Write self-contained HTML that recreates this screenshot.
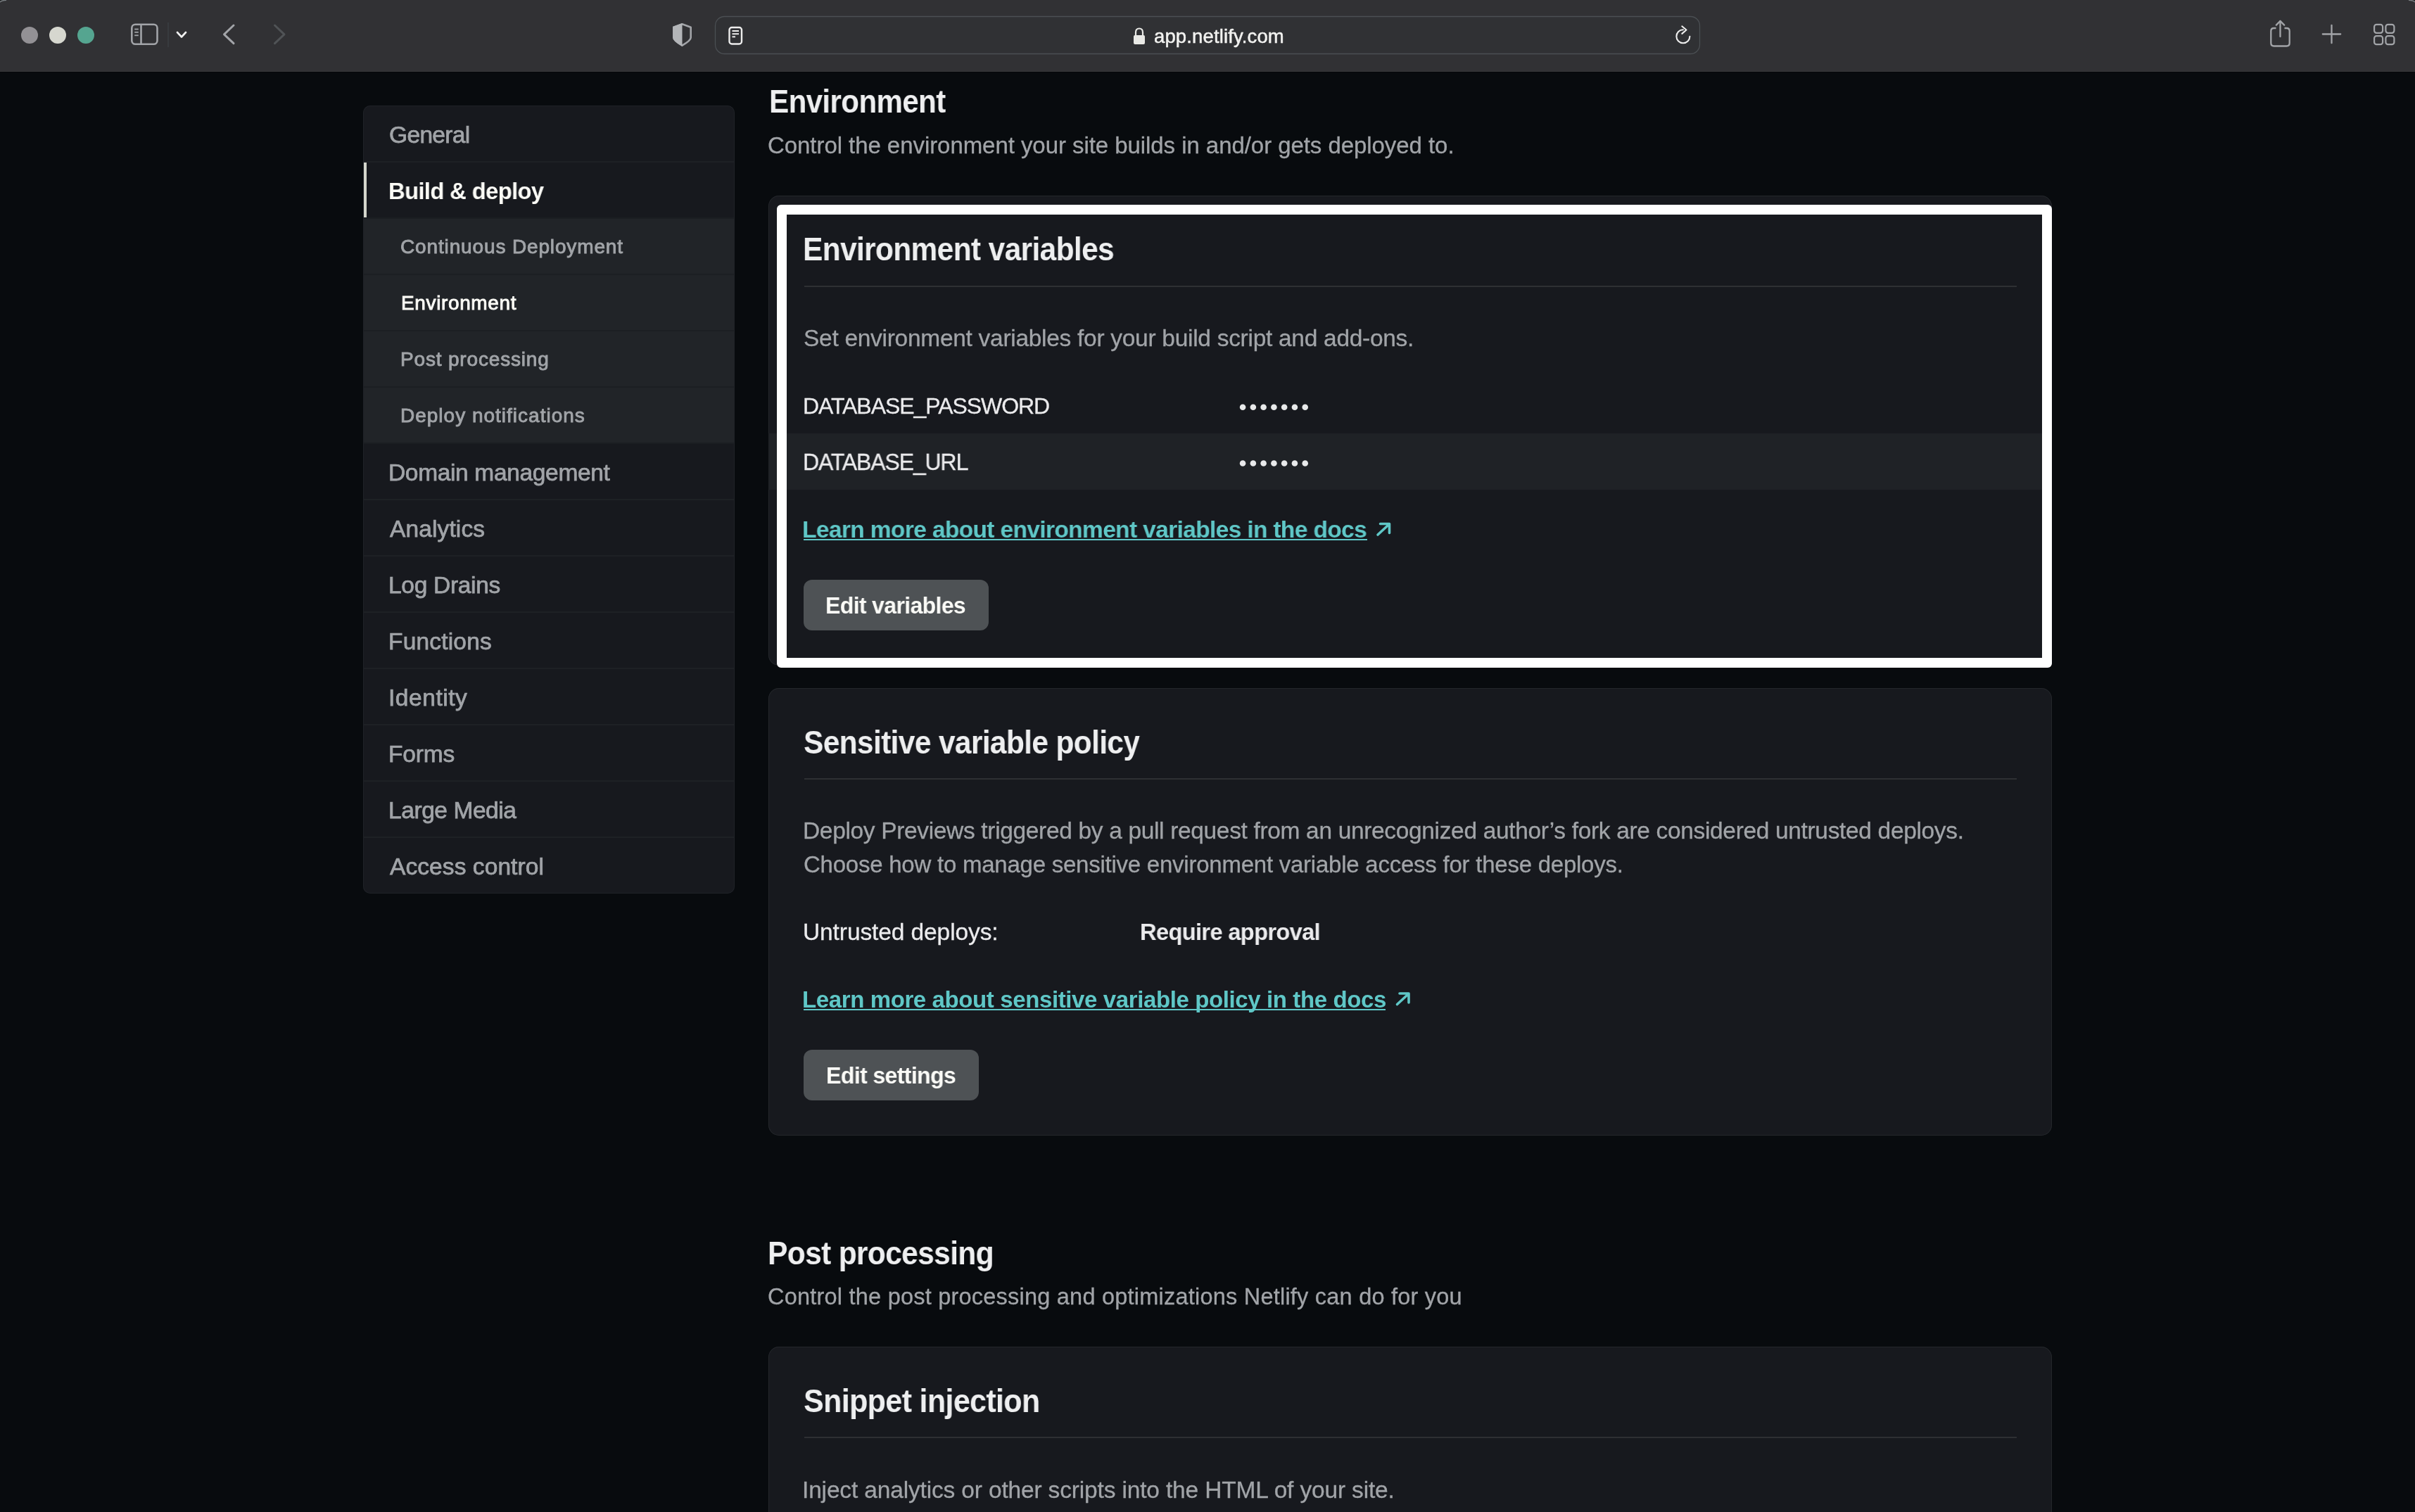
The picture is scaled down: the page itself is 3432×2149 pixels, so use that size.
<!DOCTYPE html>
<html><head><meta charset="utf-8"><style>
html,body{margin:0;padding:0;width:3432px;height:2149px;overflow:hidden;background:#080b0e;}
.b{position:absolute;}
.t{position:absolute;white-space:nowrap;font-family:"Liberation Sans",sans-serif;will-change:transform;}
</style></head><body>
<div class="b" style="left:0px;top:0px;width:3432px;height:102px;background:#313134;"></div>
<div class="b" style="left:0px;top:101px;width:3432px;height:1px;background:#363638;"></div>
<div class="b" style="left:0px;top:102px;width:3432px;height:1px;background:#050709;"></div>
<div class="b" style="left:30px;top:38px;width:24px;height:24px;background:#939195;border-radius:50%;"></div>
<div class="b" style="left:70px;top:38px;width:24px;height:24px;background:#d6d7cf;border-radius:50%;"></div>
<div class="b" style="left:110px;top:38px;width:24px;height:24px;background:#55a590;border-radius:50%;"></div>
<svg class="b" style="left:0;top:0" width="3432" height="102" viewBox="0 0 3432 102"><rect x="187.3" y="34.8" width="36.2" height="28" rx="5" fill="none" stroke="#a2a4a8" stroke-width="2.6"/><line x1="200.5" y1="35" x2="200.5" y2="63" stroke="#a2a4a8" stroke-width="2.6"/><line x1="191.2" y1="41.5" x2="196.8" y2="41.5" stroke="#a2a4a8" stroke-width="1.8"/><line x1="191.2" y1="45.8" x2="196.8" y2="45.8" stroke="#a2a4a8" stroke-width="1.8"/><line x1="191.2" y1="50.3" x2="196.8" y2="50.3" stroke="#a2a4a8" stroke-width="1.8"/><line x1="239" y1="32" x2="239" y2="67" stroke="#3f4347" stroke-width="1.2"/><polyline points="252,46 258,52.5 264,46" fill="none" stroke="#f2f2f2" stroke-width="2.6" stroke-linecap="round" stroke-linejoin="round"/><polyline points="332,36 318.5,48.8 332,61.6" fill="none" stroke="#a2a4a8" stroke-width="3" stroke-linecap="round" stroke-linejoin="round"/><polyline points="390.5,36 404,48.8 390.5,61.6" fill="none" stroke="#505356" stroke-width="3" stroke-linecap="round" stroke-linejoin="round"/><path d="M969.5,34.3 L981.7,38.8 L981.7,53.5 Q981.7,57.5 969.5,64.6 Q957.3,57.5 957.3,53.5 L957.3,38.8 Z" fill="none" stroke="#a2a4a8" stroke-width="2.6" stroke-linejoin="round"/><path d="M969.5,33 L956.2,37.8 L956.2,53.8 Q956.2,58.5 969.5,66 Z" fill="#b3b5b8"/><rect x="1016.5" y="23.5" width="1399" height="53" rx="13" fill="#303134" stroke="#4b4f53" stroke-width="1.3"/><rect x="1036.5" y="39" width="17.5" height="23.5" rx="3.5" fill="none" stroke="#ececec" stroke-width="2.4"/><line x1="1040.5" y1="44" x2="1050" y2="44" stroke="#ececec" stroke-width="2"/><line x1="1040.5" y1="48.2" x2="1050" y2="48.2" stroke="#ececec" stroke-width="2"/><line x1="1040.5" y1="52.3" x2="1045" y2="52.3" stroke="#ececec" stroke-width="2"/><path d="M1614,51 L1614,46 Q1614,40.5 1619,40.5 Q1624,40.5 1624,46 L1624,51" fill="none" stroke="#e9e9e6" stroke-width="2.2"/><rect x="1611" y="50" width="16" height="13" rx="2" fill="#e9e9e6"/><path d="M2401.4,51.8 A9.5,9.5 0 1 1 2391.9,42.3" fill="none" stroke="#ededed" stroke-width="2.1" stroke-linecap="round"/><polyline points="2390.3,37.3 2396.5,42.5 2390.3,47.9" fill="none" stroke="#ededed" stroke-width="2.1" stroke-linecap="round" stroke-linejoin="round"/><path d="M3234.5,40 L3231.5,40 Q3227.3,40 3227.3,44.2 L3227.3,61.3 Q3227.3,65.5 3231.5,65.5 L3249.5,65.5 Q3253.7,65.5 3253.7,61.3 L3253.7,44.2 Q3253.7,40 3249.5,40 L3246.5,40" fill="none" stroke="#a2a4a8" stroke-width="2.3"/><line x1="3240.5" y1="30" x2="3240.5" y2="52" stroke="#a2a4a8" stroke-width="2.3" stroke-linecap="round"/><polyline points="3234.8,35.6 3240.5,29.9 3246.2,35.6" fill="none" stroke="#a2a4a8" stroke-width="2.3" stroke-linecap="round" stroke-linejoin="round"/><line x1="3313.5" y1="35.8" x2="3313.5" y2="61.2" stroke="#a2a4a8" stroke-width="2.3" stroke-linecap="round"/><line x1="3300.8" y1="48.5" x2="3326.2" y2="48.5" stroke="#a2a4a8" stroke-width="2.3" stroke-linecap="round"/><rect x="3374.1" y="34.8" width="12" height="12" rx="3.2" fill="none" stroke="#a2a4a8" stroke-width="2.2"/><rect x="3374.1" y="51.1" width="12" height="12" rx="3.2" fill="none" stroke="#a2a4a8" stroke-width="2.2"/><rect x="3390.4" y="34.8" width="12" height="12" rx="3.2" fill="none" stroke="#a2a4a8" stroke-width="2.2"/><rect x="3390.4" y="51.1" width="12" height="12" rx="3.2" fill="none" stroke="#a2a4a8" stroke-width="2.2"/><path d="M0,0 L9,0 Q2,0.5 0,3 Z" fill="#1b1c1d"/><path d="M0,3 Q2,0.5 9,0.2" fill="none" stroke="#7b8185" stroke-width="1.4"/><path d="M3432,0 L3423,0 Q3430,0.5 3432,3 Z" fill="#1b1c1d"/><path d="M3432,3 Q3430,0.5 3423,0.2" fill="none" stroke="#7b8185" stroke-width="1.4"/></svg>
<div class="t" style="left:1640.10px;top:34.4px;font-size:27.5px;line-height:36px;font-weight:400;color:#f2f2f0;letter-spacing:0.13px;-webkit-text-stroke:0.5px #f2f2f0;">app.netlify.com</div>
<div class="b" style="left:0px;top:103px;width:3432px;height:2046px;background:#080b0e;"></div>
<div class="b" style="left:516px;top:150px;width:528px;height:1120px;background:#17191e;border-radius:10px;box-shadow:inset 0 0 0 1px #1f2227;"></div>
<div class="b" style="left:517px;top:311px;width:526px;height:318px;background:#212428;"></div>
<div class="b" style="left:517px;top:229px;width:526px;height:2px;background:#1e2125;"></div>
<div class="b" style="left:517px;top:309px;width:526px;height:2px;background:#1b1e22;"></div>
<div class="b" style="left:517px;top:389px;width:526px;height:2px;background:#1c1f23;"></div>
<div class="b" style="left:517px;top:469px;width:526px;height:2px;background:#1c1f23;"></div>
<div class="b" style="left:517px;top:549px;width:526px;height:2px;background:#1c1f23;"></div>
<div class="b" style="left:517px;top:629px;width:526px;height:2px;background:#1b1e22;"></div>
<div class="b" style="left:517px;top:709px;width:526px;height:2px;background:#1e2125;"></div>
<div class="b" style="left:517px;top:789px;width:526px;height:2px;background:#1e2125;"></div>
<div class="b" style="left:517px;top:869px;width:526px;height:2px;background:#1e2125;"></div>
<div class="b" style="left:517px;top:949px;width:526px;height:2px;background:#1e2125;"></div>
<div class="b" style="left:517px;top:1029px;width:526px;height:2px;background:#1e2125;"></div>
<div class="b" style="left:517px;top:1109px;width:526px;height:2px;background:#1e2125;"></div>
<div class="b" style="left:517px;top:1189px;width:526px;height:2px;background:#1e2125;"></div>
<div class="b" style="left:517px;top:231px;width:4px;height:78px;background:#d4d6cc;"></div>
<div class="t" style="left:553.10px;top:170px;font-size:33.5px;line-height:44px;font-weight:400;color:#a1a4a8;letter-spacing:-0.65px;-webkit-text-stroke:0.75px #a1a4a8;">General</div>
<div class="t" style="left:552.20px;top:250.39999999999998px;font-size:33.5px;line-height:44px;font-weight:700;color:#fbfbf6;letter-spacing:-0.7px;transform:scaleX(0.9808);transform-origin:0 0;">Build & deploy</div>
<div class="t" style="left:569.10px;top:332.3px;font-size:28.0px;line-height:37px;font-weight:400;color:#a1a4a8;letter-spacing:0.86px;-webkit-text-stroke:0.9px #a1a4a8;">Continuous Deployment</div>
<div class="t" style="left:569.88px;top:412.3px;font-size:28.0px;line-height:37px;font-weight:400;color:#fbfbf6;letter-spacing:0.63px;-webkit-text-stroke:0.9px #fbfbf6;">Environment</div>
<div class="t" style="left:569.10px;top:492.29999999999995px;font-size:28.0px;line-height:37px;font-weight:400;color:#a1a4a8;letter-spacing:0.83px;-webkit-text-stroke:0.9px #a1a4a8;">Post processing</div>
<div class="t" style="left:569.10px;top:572.3px;font-size:28.0px;line-height:37px;font-weight:400;color:#a1a4a8;letter-spacing:1.0px;-webkit-text-stroke:0.9px #a1a4a8;">Deploy notifications</div>
<div class="t" style="left:552.20px;top:650px;font-size:33.5px;line-height:44px;font-weight:400;color:#a1a4a8;letter-spacing:-0.34px;-webkit-text-stroke:0.75px #a1a4a8;">Domain management</div>
<div class="t" style="left:554.00px;top:730px;font-size:33.5px;line-height:44px;font-weight:400;color:#a1a4a8;letter-spacing:0.12px;-webkit-text-stroke:0.75px #a1a4a8;">Analytics</div>
<div class="t" style="left:552.20px;top:810px;font-size:33.5px;line-height:44px;font-weight:400;color:#a1a4a8;letter-spacing:-0.3px;-webkit-text-stroke:0.75px #a1a4a8;">Log Drains</div>
<div class="t" style="left:552.20px;top:890px;font-size:33.5px;line-height:44px;font-weight:400;color:#a1a4a8;letter-spacing:0.19px;-webkit-text-stroke:0.75px #a1a4a8;">Functions</div>
<div class="t" style="left:552.20px;top:970px;font-size:33.5px;line-height:44px;font-weight:400;color:#a1a4a8;letter-spacing:0.55px;-webkit-text-stroke:0.75px #a1a4a8;">Identity</div>
<div class="t" style="left:552.20px;top:1050px;font-size:33.5px;line-height:44px;font-weight:400;color:#a1a4a8;letter-spacing:-0.15px;-webkit-text-stroke:0.75px #a1a4a8;">Forms</div>
<div class="t" style="left:552.20px;top:1130px;font-size:33.5px;line-height:44px;font-weight:400;color:#a1a4a8;letter-spacing:-0.43px;-webkit-text-stroke:0.75px #a1a4a8;">Large Media</div>
<div class="t" style="left:554.00px;top:1210px;font-size:33.5px;line-height:44px;font-weight:400;color:#a1a4a8;letter-spacing:0.08px;-webkit-text-stroke:0.75px #a1a4a8;">Access control</div>
<div class="t" style="left:1092.72px;top:115px;font-size:45.5px;line-height:60px;font-weight:700;color:#eeeff0;letter-spacing:-0.7px;transform:scaleX(0.9268);transform-origin:0 0;">Environment</div>
<div class="t" style="left:1091.10px;top:185px;font-size:33.0px;line-height:43px;font-weight:400;color:#a1a4a8;letter-spacing:-0.06px;-webkit-text-stroke:0.3px #a1a4a8;">Control the environment your site builds in and/or gets deployed to.</div>
<div class="b" style="left:1092px;top:278px;width:1824px;height:668px;background:#17191e;border-radius:15px;box-shadow:inset 0 0 0 1px #24272b;"></div>
<div class="b" style="left:1092px;top:616px;width:1824px;height:80px;background:#1f2226;"></div>
<div class="b" style="left:1104px;top:291px;width:1812px;height:658px;background:transparent;border:14px solid #ffffff;border-radius:6px;box-sizing:border-box;"></div>
<div class="t" style="left:1141.20px;top:324.4px;font-size:46.0px;line-height:60px;font-weight:700;color:#eeeff0;letter-spacing:-0.7px;transform:scaleX(0.9234);transform-origin:0 0;">Environment variables</div>
<div class="b" style="left:1143px;top:406px;width:1723px;height:2px;background:#2e3033;"></div>
<div class="t" style="left:1142.10px;top:459px;font-size:33.5px;line-height:44px;font-weight:400;color:#a1a4a8;letter-spacing:-0.29px;-webkit-text-stroke:0.3px #a1a4a8;">Set environment variables for your build script and add-ons.</div>
<div class="t" style="left:1141.20px;top:555.7px;font-size:32.0px;line-height:42px;font-weight:400;color:#ebebed;letter-spacing:-1.06px;-webkit-text-stroke:0.3px #ebebed;">DATABASE_PASSWORD</div>
<div class="t" style="left:1141.20px;top:636px;font-size:32.5px;line-height:43px;font-weight:400;color:#ebebed;letter-spacing:-1.2px;transform:scaleX(0.9867);transform-origin:0 0;-webkit-text-stroke:0.3px #ebebed;">DATABASE_URL</div>
<svg class="b" style="left:0;top:0;z-index:5" width="3432" height="2149" viewBox="0 0 3432 2149"><circle cx="1766.10" cy="578.7" r="4.3" fill="#e8e9ea"/><circle cx="1780.87" cy="578.7" r="4.3" fill="#e8e9ea"/><circle cx="1795.64" cy="578.7" r="4.3" fill="#e8e9ea"/><circle cx="1810.41" cy="578.7" r="4.3" fill="#e8e9ea"/><circle cx="1825.18" cy="578.7" r="4.3" fill="#e8e9ea"/><circle cx="1839.95" cy="578.7" r="4.3" fill="#e8e9ea"/><circle cx="1854.72" cy="578.7" r="4.3" fill="#e8e9ea"/><circle cx="1766.10" cy="658.5" r="4.3" fill="#e8e9ea"/><circle cx="1780.87" cy="658.5" r="4.3" fill="#e8e9ea"/><circle cx="1795.64" cy="658.5" r="4.3" fill="#e8e9ea"/><circle cx="1810.41" cy="658.5" r="4.3" fill="#e8e9ea"/><circle cx="1825.18" cy="658.5" r="4.3" fill="#e8e9ea"/><circle cx="1839.95" cy="658.5" r="4.3" fill="#e8e9ea"/><circle cx="1854.72" cy="658.5" r="4.3" fill="#e8e9ea"/><path d="M1958,760 L1974.5,744.8 M1961.5,744.5 L1974.5,744.5 L1974.5,757.5" fill="none" stroke="#5fc7c7" stroke-width="3.6" stroke-linecap="round" stroke-linejoin="round"/><path d="M1985.5,1427.5 L2002,1412.3 M1989,1412 L2002,1412 L2002,1425" fill="none" stroke="#5fc7c7" stroke-width="3.6" stroke-linecap="round" stroke-linejoin="round"/></svg>
<div class="t" style="left:1140.20px;top:730.2px;font-size:34.0px;line-height:45px;font-weight:700;color:#5fc7c7;letter-spacing:-0.7px;transform:scaleX(0.9884);transform-origin:0 0;">Learn more about environment variables in the docs</div>
<div class="b" style="left:1142px;top:766px;width:801px;height:2px;background:#5fc7c7;"></div>
<div class="b" style="left:1142px;top:824px;width:263px;height:72px;background:#4e5255;border-radius:12px;"></div>
<div class="t" style="left:1173.20px;top:838.8px;font-size:33.5px;line-height:44px;font-weight:700;color:#fbfbf7;letter-spacing:-0.7px;transform:scaleX(0.9569);transform-origin:0 0;">Edit variables</div>
<div class="b" style="left:1092px;top:978px;width:1824px;height:636px;background:#17191e;border-radius:15px;box-shadow:inset 0 0 0 1px #24272b;"></div>
<div class="t" style="left:1142.10px;top:1026px;font-size:45.5px;line-height:60px;font-weight:700;color:#eeeff0;letter-spacing:-0.7px;transform:scaleX(0.9340);transform-origin:0 0;">Sensitive variable policy</div>
<div class="b" style="left:1143px;top:1106px;width:1723px;height:2px;background:#2e3033;"></div>
<div class="t" style="left:1141.20px;top:1159.2px;font-size:33.5px;line-height:44px;font-weight:400;color:#a1a4a8;letter-spacing:-0.34px;-webkit-text-stroke:0.3px #a1a4a8;">Deploy Previews triggered by a pull request from an unrecognized author’s fork are considered untrusted deploys.</div>
<div class="t" style="left:1142.10px;top:1207.2px;font-size:33.0px;line-height:43px;font-weight:400;color:#a1a4a8;letter-spacing:-0.24px;-webkit-text-stroke:0.3px #a1a4a8;">Choose how to manage sensitive environment variable access for these deploys.</div>
<div class="t" style="left:1141.20px;top:1303px;font-size:33.5px;line-height:44px;font-weight:400;color:#ebebed;letter-spacing:-0.1px;-webkit-text-stroke:0.3px #ebebed;">Untrusted deploys:</div>
<div class="t" style="left:1620.20px;top:1303px;font-size:33.5px;line-height:44px;font-weight:700;color:#ebebed;letter-spacing:-0.7px;transform:scaleX(0.9752);transform-origin:0 0;">Require approval</div>
<div class="t" style="left:1140.20px;top:1398.6px;font-size:33.0px;line-height:43px;font-weight:700;color:#5fc7c7;letter-spacing:-0.39px;">Learn more about sensitive variable policy in the docs</div>
<div class="b" style="left:1142px;top:1434px;width:827px;height:2px;background:#5fc7c7;"></div>
<div class="b" style="left:1142px;top:1492px;width:249px;height:72px;background:#4e5255;border-radius:12px;"></div>
<div class="t" style="left:1174.18px;top:1508px;font-size:32.5px;line-height:43px;font-weight:700;color:#fbfbf7;letter-spacing:-0.7px;transform:scaleX(0.9904);transform-origin:0 0;">Edit settings</div>
<div class="t" style="left:1091.26px;top:1751px;font-size:46.0px;line-height:60px;font-weight:700;color:#eeeff0;letter-spacing:-0.7px;transform:scaleX(0.9239);transform-origin:0 0;">Post processing</div>
<div class="t" style="left:1091.10px;top:1822px;font-size:32.5px;line-height:43px;font-weight:400;color:#a1a4a8;letter-spacing:0.22px;-webkit-text-stroke:0.3px #a1a4a8;">Control the post processing and optimizations Netlify can do for you</div>
<div class="b" style="left:1092px;top:1914px;width:1824px;height:400px;background:#17191e;border-radius:15px;box-shadow:inset 0 0 0 1px #24272b;"></div>
<div class="t" style="left:1142.10px;top:1960.6px;font-size:46.0px;line-height:60px;font-weight:700;color:#eeeff0;letter-spacing:-0.7px;transform:scaleX(0.9357);transform-origin:0 0;">Snippet injection</div>
<div class="b" style="left:1143px;top:2042px;width:1723px;height:2px;background:#2e3033;"></div>
<div class="t" style="left:1140.30px;top:2095.5px;font-size:33.5px;line-height:44px;font-weight:400;color:#a1a4a8;letter-spacing:-0.16px;-webkit-text-stroke:0.3px #a1a4a8;">Inject analytics or other scripts into the HTML of your site.</div>
</body></html>
